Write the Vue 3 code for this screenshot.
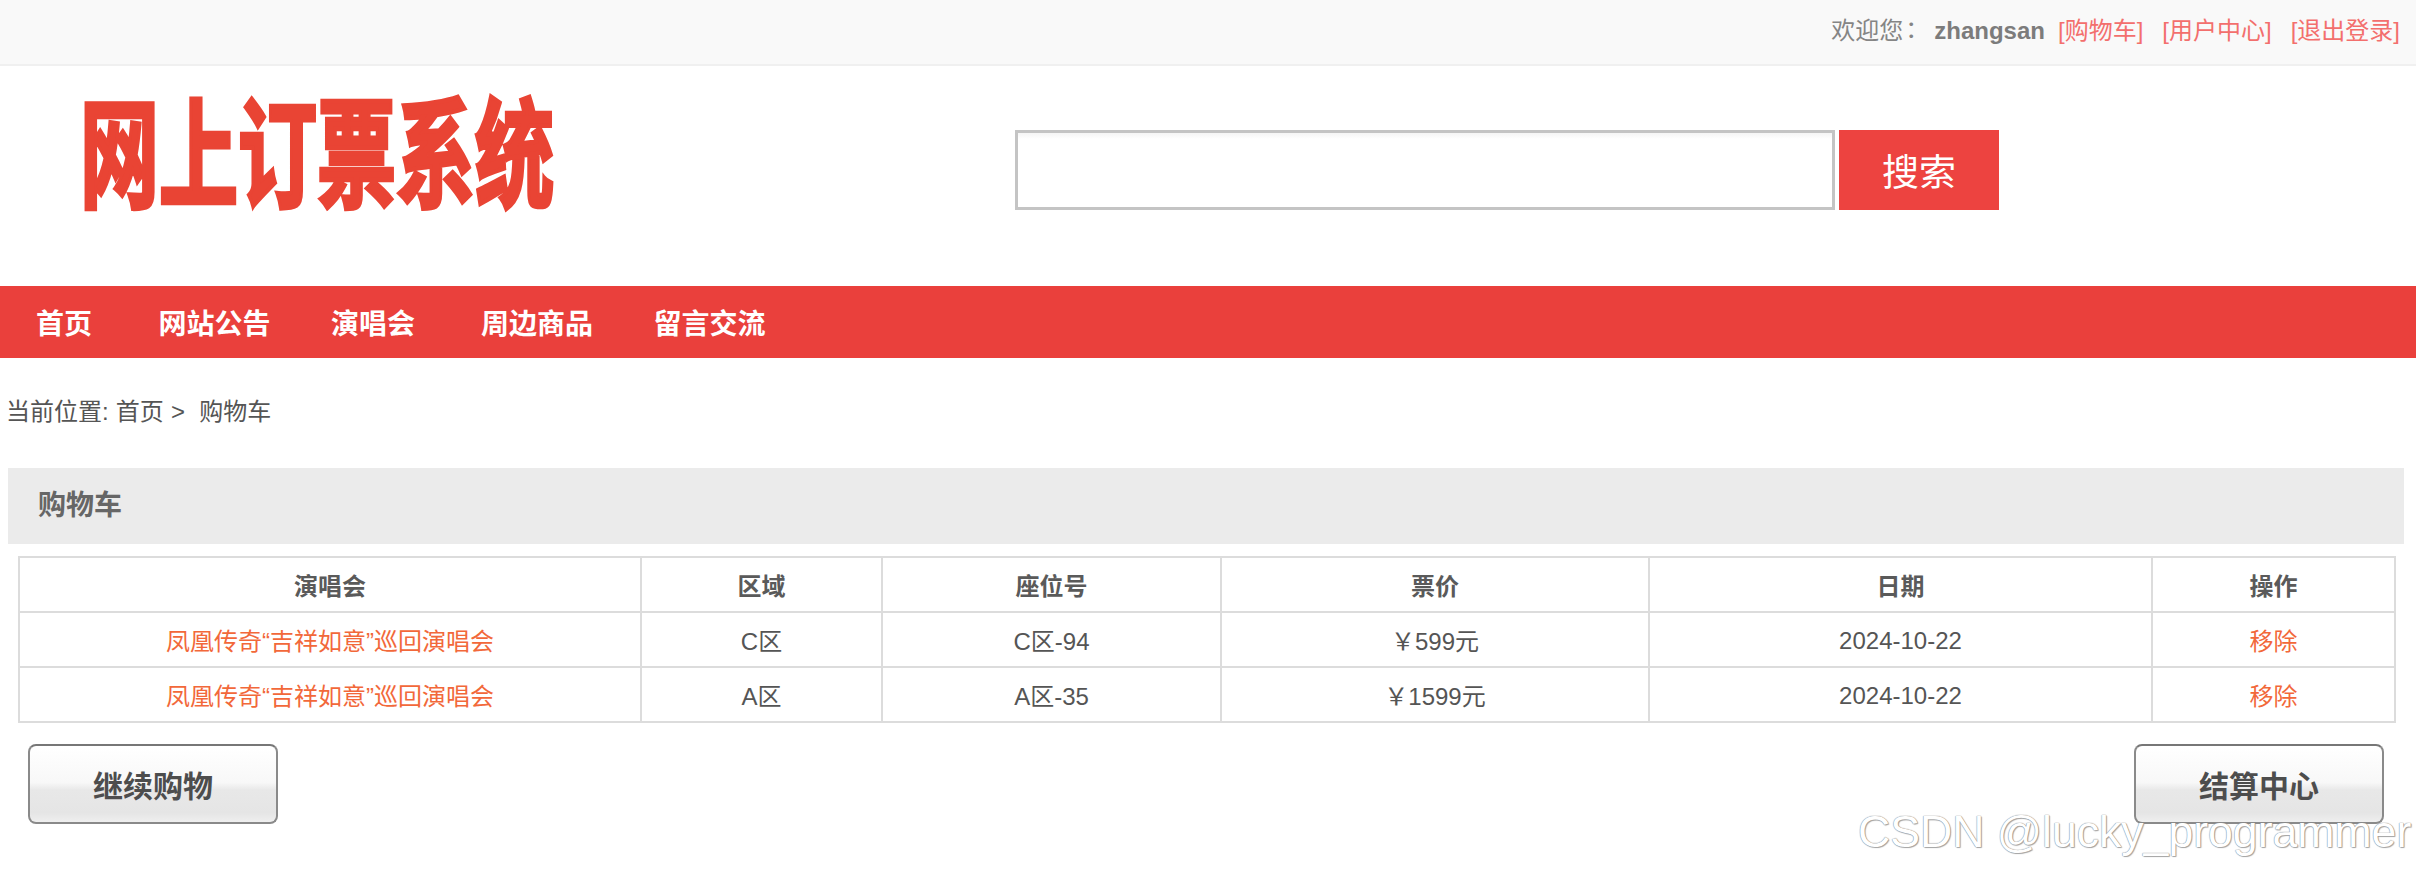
<script setup>
const links = ['[购物车]', '[用户中心]', '[退出登录]']
const navItems = [
  { label: '首页', gap: 66.5 },
  { label: '网站公告', gap: 60.5 },
  { label: '演唱会', gap: 66 },
  { label: '周边商品', gap: 60.5 },
  { label: '留言交流', gap: 0 }
]
const columns = [
  { label: '演唱会', width: 622 },
  { label: '区域', width: 241 },
  { label: '座位号', width: 339 },
  { label: '票价', width: 428 },
  { label: '日期', width: 503 },
  { label: '操作', width: 243 }
]
const rows = [
  { name: '凤凰传奇“吉祥如意”巡回演唱会', area: 'C区', seat: 'C区-94', price: '￥599元', date: '2024-10-22' },
  { name: '凤凰传奇“吉祥如意”巡回演唱会', area: 'A区', seat: 'A区-35', price: '￥1599元', date: '2024-10-22' }
]
</script>

<template>
  <div class="page">
    <div class="topbar">
      <span class="welcome">欢迎您<span class="colon">：</span></span>
      <b class="user">zhangsan</b>
      <a v-for="l in links" :key="l" class="toplink">{{ l }}</a>
    </div>

    <div class="header">
      <div class="logo"><span class="logo-text">网上订票系统</span></div>
      <div class="search">
        <input class="search-input" type="text" />
        <button class="search-btn">搜索</button>
      </div>
    </div>

    <nav class="nav">
      <a v-for="n in navItems" :key="n.label" class="nav-item" :style="{ marginRight: n.gap + 'px' }">{{ n.label }}</a>
    </nav>

    <div class="crumb">当前位置: 首页 &gt;&nbsp; 购物车</div>

    <h2 class="panel">购物车</h2>

    <table class="cart">
      <colgroup>
        <col v-for="c in columns" :key="c.label" :style="{ width: c.width + 'px' }" />
      </colgroup>
      <thead>
        <tr><th v-for="c in columns" :key="c.label">{{ c.label }}</th></tr>
      </thead>
      <tbody>
        <tr v-for="(r, i) in rows" :key="i">
          <td class="orange">{{ r.name }}</td>
          <td>{{ r.area }}</td>
          <td>{{ r.seat }}</td>
          <td>{{ r.price }}</td>
          <td class="date">{{ r.date }}</td>
          <td class="orange">移除</td>
        </tr>
      </tbody>
    </table>

    <div class="actions">
      <button class="img-btn">继续购物</button>
      <button class="img-btn">结算中心</button>
    </div>

    <div class="watermark">CSDN @lucky_programmer</div>
  </div>
</template>

<style>
html, body { margin: 0; background: #fff; }
</style>

<style scoped>
.page {
  position: relative;
  width: 2416px;
  height: 870px;
  overflow: hidden;
  background: #fff;
  color: #555;
  font-family: "Liberation Sans", "Noto Sans CJK SC", sans-serif;
  font-size: 24px;
}
.topbar {
  box-sizing: border-box;
  height: 66px;
  background: #f9f9f9;
  border-bottom: 2px solid #f0f0f0;
  display: flex;
  justify-content: flex-end;
  align-items: baseline;
  line-height: 58px;
  padding: 0 16px 0 0;
  color: #858585;
}
.colon { font-family: "Noto Sans CJK TC", sans-serif; margin-left: -4px; margin-right: 4px; }
.user { margin-left: 7px; margin-right: 13px; color: #7c7c7c; }
.toplink { color: #f36f6d; margin-left: 19px; }
.user + .toplink { margin-left: 0; }
.header {
  height: 220px;
  display: flex;
}
.logo {
  width: 472px;
  height: 116px;
  margin: 33px 0 0 80px;
}
.logo-text {
  display: block;
  width: 472px;
  line-height: 116px;
  font-size: 79px;
  font-weight: 700;
  white-space: nowrap;
  color: #e94434;
  -webkit-text-stroke: 3px #e94434;
  transform: scaleY(1.5);
}
.search {
  display: flex;
  margin: 64px 0 0 463px;
  height: 80px;
}
.search-input {
  box-sizing: border-box;
  width: 820px;
  height: 80px;
  margin: 0 4px 0 0;
  padding: 0;
  border: 3px solid #c4c4c4;
  background: linear-gradient(#f5f5f5, #fff 6px);
  outline: none;
}
.search-btn {
  width: 160px;
  height: 80px;
  padding: 0;
  border: none;
  background: #ed4340;
  color: #fff;
  font-family: inherit;
  font-size: 37px;
}
.nav {
  height: 72px;
  background: #ea403c;
  display: flex;
  align-items: center;
  padding-left: 36px;
  box-sizing: border-box;
}
.nav-item {
  color: #fff;
  font-size: 28px;
  font-weight: 700;
}
.crumb {
  margin-top: 36px;
  line-height: 36px;
  padding-left: 6px;
  word-spacing: 0.5px;
  color: #555;
}
.panel {
  box-sizing: border-box;
  margin: 38px 12px 0 8px;
  height: 76px;
  line-height: 76px;
  padding-left: 30px;
  background: #ebebeb;
  color: #666;
  font-size: 28px;
  font-weight: 700;
}
.cart {
  box-sizing: border-box;
  width: 2376px;
  margin: 12px 22px 0 18px;
  border-collapse: collapse;
  table-layout: fixed;
}
.cart th, .cart td {
  box-sizing: border-box;
  height: 55px;
  padding: 0;
  border: 2px solid #dcdcdc;
  text-align: center;
  font-size: 24px;
}
.cart th { color: #5a5a5a; font-weight: 700; }
.cart td { color: #555; font-weight: 400; }
.cart td.orange { color: #f2683a; }
.cart td.date { padding-top: 2px; }
.actions {
  display: flex;
  justify-content: space-between;
  padding: 0 32px 0 28px;
  margin-top: 21px;
}
.img-btn {
  box-sizing: border-box;
  width: 250px;
  height: 80px;
  padding: 0;
  border: 2px solid #8a8a8a;
  border-top-color: #777;
  border-radius: 8px;
  background: linear-gradient(#fff 0%, #f8f8f8 48%, #e8e8e8 58%, #e5e5e5 88%, #efefef 100%);
  color: #4d4d4d;
  font-family: inherit;
  font-size: 30px;
  font-weight: 700;
}
.watermark {
  position: absolute;
  left: 1858px;
  top: 804px;
  line-height: 56px;
  font-size: 44.6px;
  white-space: nowrap;
  color: #fff;
  text-shadow: 0 0 1px #888, 0 0 1px #888, 1px 1px 1px #aaa;
}
</style>
